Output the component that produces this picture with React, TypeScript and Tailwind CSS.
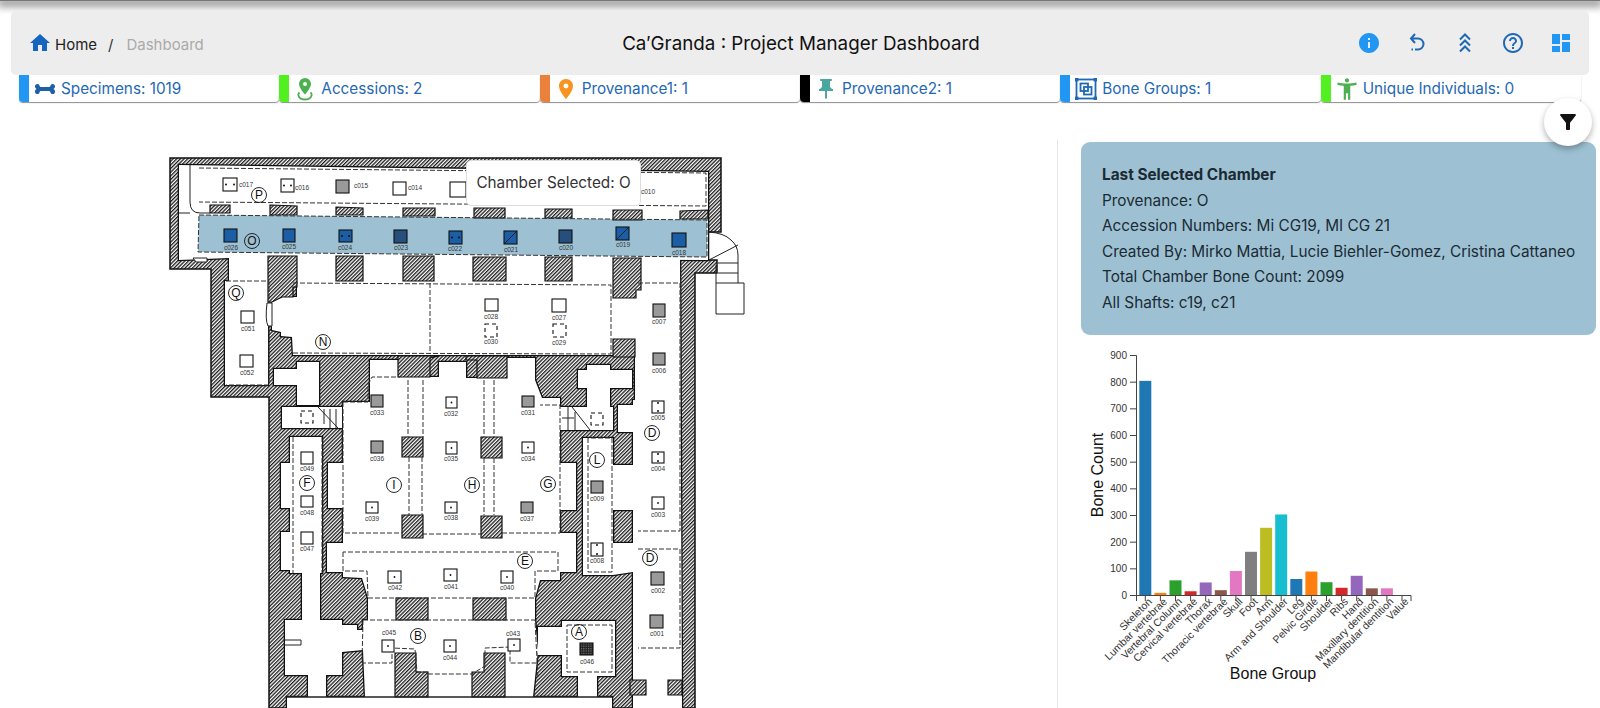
import React from "react";
import { FaBone } from "react-icons/fa";
import { MdHome, MdInfo, MdHelpOutline, MdDashboard, MdLocationOn, MdPushPin, MdAccessibilityNew, MdFilterAlt } from "react-icons/md";

const rooms = [
  "179,165 708,172 708,260 229,258 179,260",
  "229,257 268,257 268,385 225,385 225,281 229,281",
  "272,302 282,297 297,297 297,257 641,257 641,339 613,339 613,355 293,355 292,337 281,336 281,332 272,330",
  "635,257 680,257 682,708 633,708 633,400 635,400",
  "370,360 398,360 398,377 439,377 439,362 466,362 466,378 507,378 507,358 535,358 535,380 542,398 560,398 560,463 576,463 576,510 560,510 560,533 576,533 576,572 560,572 560,580 540,580 535,598 535,620 538,650 533,697 612,697 612,708 287,708 287,697 365,697 363,650 363,620 368,620 368,598 362,578 343,577 343,572 327,572 327,543 343,543 343,508 328,508 328,463 343,463 343,402 370,402",
  "538,627 562,627 562,621 615,621 615,676 597,676 597,697 578,697 578,676 562,676 562,655 538,655",
  "285,620 342,620 342,625 357,625 357,630 363,630 363,650 342,652 342,675 326,675 326,697 308,697 308,675 285,675",
  "290,437 322,437 322,573 320,573 320,620 302,620 302,573 290,573 290,570 281,570 281,532 290,532 290,508 281,508 281,463 290,463",
  "583,438 613,438 613,465 633,465 633,510 613,510 613,543 633,543 633,572 613,575 583,575",
  "618,405 638,405 638,432 618,432",
  "560,407 613,407 613,430 560,430",
  "282,407 342,407 342,428 282,428",
  "297,362 319,362 319,405 297,405 297,385 274,385 274,369 297,369",
  "587,365 610,365 610,370 632,370 632,388 610,388 610,407 587,407 587,388 578,388 578,370 587,370",
];

const piers = [
  "210,205 230,205 230,213 210,213", "270,205 297,206 297,215 270,215", "336,207 363,208 363,215 336,215",
  "403,208 435,208 435,216 403,216", "474,208 505,208 505,218 474,218", "545,209 572,209 572,218 545,218",
  "613,210 642,210 642,220 613,220", "680,211 708,210 708,219 680,219",
  "268,256 297,256 297,287 293,287 293,297 282,297 272,302 268,302", "336,256 363,256 363,281 336,281",
  "403,256 434,256 434,281 403,281", "473,257 506,257 506,281 473,281", "545,257 572,257 572,281 545,281",
  "613,258 641,258 641,290 636,290 636,298 613,298",
  "398,356 439,356 430,358 430,377 398,377", "466,356 507,356 507,378 477,378 477,360 466,360",
  "402,437 423,437 423,457 402,457", "481,437 502,437 502,458 481,458", "402,515 423,515 423,538 402,538", "481,516 502,516 502,538 481,538",
  "396,598 428,598 428,620 396,620", "473,598 506,598 506,620 473,620",
  "395,653 416,653 416,672 428,672 428,697 395,697", "484,653 505,653 505,697 472,697 472,672 484,672",
  "630,680 646,680 646,695 630,695", "668,680 682,680 682,695 668,695",
  "613,339 635,339 635,357 613,357",
];

const dashed = [
  "199,168 706,173 706,206 199,202", "226,281 269,281 269,385 226,385", "293,283 611,285 611,354 293,353",
  "638,283 680,283 680,531 638,531", "638,549 680,549 680,648 638,648",
  "343,402 368,402 368,385 372,377 400,377", "343,402 343,533 402,533",
  "423,533 423,534 481,534", "502,533 560,533 560,405 540,405",
  "293,437 293,573", "322,437 322,573", "588,438 588,572 612,572 612,438 588,438",
  "343,552 343,571 367,571 368,598 535,598 535,571 558,571 558,552 343,552",
  "363,620 535,620 538,680", "363,620 362,663 392,663 392,648 415,649 417,672 428,672 428,674 472,674 485,666 485,648 510,647 510,663 537,663",
  "567,625 612,625 612,672 567,672 567,625",
  "408,380 408,437", "423,380 423,437", "409,457 409,515", "422,457 422,515", "484,380 484,437", "494,380 494,437", "484,458 484,515", "494,458 494,515",
  "430,283 430,354",
];

type Sq = [number, number, number, number, string, string, number, number];
const squares: Sq[] = [
  [223, 178, 14, 13, "dots", "c017", 246, 187], [281, 179, 13, 13, "dots", "c016", 302, 190], [336, 180, 13, 13, "gray", "c015", 361, 188], [393, 182, 13, 13, "plain", "c014", 415, 190], [450, 182, 16, 15, "plain", "", 0, 0],
  [224, 229, 13, 13, "blue", "c026", 231, 250], [283, 229, 12, 13, "blue", "c025", 289, 249], [339, 230, 13, 12, "bluedots", "c024", 345, 250], [394, 230, 13, 13, "bluegray", "c023", 401, 250], [449, 231, 13, 13, "bluedots", "c022", 455, 251], [504, 231, 13, 13, "blueline", "c021", 511, 252], [559, 230, 13, 13, "bluegray", "c020", 566, 250], [616, 227, 13, 13, "blueline", "c019", 623, 247], [672, 233, 14, 14, "blue", "c018", 679, 255],
  [241, 311, 13, 12, "plain", "c051", 248, 331], [240, 355, 13, 12, "plain", "c052", 247, 375],
  [485, 299, 13, 12, "plain", "c028", 491, 319], [552, 299, 14, 13, "plain", "c027", 559, 320], [485, 324, 12, 13, "dash", "c030", 491, 344], [553, 324, 13, 13, "dash", "c029", 559, 345],
  [653, 304, 12, 13, "gray", "c007", 659, 324], [653, 353, 12, 12, "gray", "c006", 659, 373], [652, 401, 12, 12, "vdots", "c005", 658, 420],
  [371, 395, 12, 12, "gray", "c033", 377, 415], [446, 397, 11, 11, "dot", "c032", 451, 416], [522, 396, 12, 11, "gray", "c031", 528, 415],
  [371, 441, 12, 12, "gray", "c036", 377, 461], [446, 442, 11, 12, "dot", "c035", 451, 461], [522, 442, 12, 11, "dot", "c034", 528, 461],
  [366, 502, 12, 11, "dot", "c039", 372, 521], [445, 502, 12, 11, "dot", "c038", 451, 520], [521, 502, 12, 11, "gray", "c037", 527, 521],
  [301, 452, 12, 12, "plain", "c049", 307, 471], [301, 496, 12, 11, "plain", "c048", 307, 515], [301, 532, 12, 12, "plain", "c047", 307, 551],
  [591, 481, 12, 12, "gray", "c009", 597, 501], [591, 543, 12, 13, "vdots", "c008", 597, 563], [652, 452, 12, 11, "vdots", "c004", 658, 471], [652, 497, 12, 12, "dot", "c003", 658, 517],
  [651, 572, 13, 13, "gray", "c002", 658, 593], [650, 615, 13, 13, "gray", "c001", 657, 636],
  [388, 571, 13, 12, "dot", "c042", 395, 590], [444, 569, 13, 12, "dot", "c041", 451, 589], [501, 571, 12, 12, "dot", "c040", 507, 590],
  [382, 640, 12, 12, "dot", "c045", 389, 635], [444, 640, 12, 12, "dot", "c044", 450, 660], [508, 639, 12, 12, "dot", "c043", 513, 636], [580, 643, 13, 12, "dark", "c046", 587, 664],
  [301, 411, 12, 12, "dash", "", 0, 0], [591, 413, 12, 12, "dash", "", 0, 0],
];

const circles: [number, number, string][] = [
  [252, 241, "O"], [259, 195, "P"], [236, 293, "Q"], [323, 342, "N"], [394, 485, "I"], [472, 485, "H"], [548, 484, "G"], [307, 483, "F"], [597, 460, "L"], [525, 561, "E"], [418, 636, "B"], [579, 632, "A"], [652, 433, "D"], [650, 558, "D"],
];

function Square({ s }: { s: Sq }) {
  const [x, y, w, h, t, label, lx, ly] = s;
  const blue = t.startsWith("blue");
  const fill = t === "gray" || t === "bluegray" ? (t === "gray" ? "#9a9a9a" : "#264f7d") : t === "dark" ? "url(#chk)" : blue ? "#1b5ea6" : t === "dash" ? "none" : "#fff";
  const cx = x + w / 2;
  const cy = y + h / 2;
  return (
    <g>
      <rect x={x} y={y} width={w} height={h} fill={fill} stroke="#111" strokeWidth={1.1} strokeDasharray={t === "dash" ? "4 3" : undefined} />
      {(t === "dots" || t === "bluedots") && (
        <>
          <circle cx={x + 3} cy={cy} r={1} fill="#111" />
          <circle cx={x + w - 3} cy={cy} r={1} fill="#111" />
        </>
      )}
      {t === "vdots" && (
        <>
          <circle cx={cx} cy={y + 2} r={1} fill="#111" />
          <circle cx={cx} cy={y + h - 2} r={1} fill="#111" />
        </>
      )}
      {t === "dot" && <circle cx={cx} cy={cy} r={0.9} fill="#111" />}
      {t === "blueline" && <line x1={x} y1={y + h} x2={x + w} y2={y} stroke="#111" strokeWidth={0.8} />}
      {label && (
        <text x={lx} y={ly} textAnchor="middle" fontSize={6.5} fill="#333" fontFamily="'Liberation Sans', sans-serif">
          {label}
        </text>
      )}
    </g>
  );
}

function FloorPlan() {
  return (
    <svg viewBox="0 140 1057 568" className="block w-[1057px] h-[568px]">
      <defs>
        <pattern id="hatch" width="2.6" height="2.6" patternUnits="userSpaceOnUse" patternTransform="rotate(-45)">
          <rect width="2.6" height="2.6" fill="#fff" />
          <rect width="2.6" height="1.3" fill="#1a1a1a" />
        </pattern>
        <pattern id="chk" width="2.4" height="2.4" patternUnits="userSpaceOnUse">
          <rect width="2.4" height="2.4" fill="#222" />
          <rect width="1.2" height="1.2" fill="#777" />
        </pattern>
      </defs>
      <polygon
        points="170,158 721,158 721,232 708,232 708,260 717,260 717,273 695,273 695,708 269,708 269,397 211,397 211,269 170,269"
        fill="url(#hatch)"
        stroke="#111"
        strokeWidth={1.5}
      />
      <g stroke="#111" strokeWidth={2.6} fill="none">
        {rooms.map((p, i) => (
          <polygon key={i} points={p} />
        ))}
      </g>
      <g fill="#fff">
        {rooms.map((p, i) => (
          <polygon key={i} points={p} />
        ))}
      </g>
      <polygon points="199,215 707,220 707,257 198,252" fill="#9dc1d3" />
      <g stroke="#111" strokeWidth={1.2} fill="url(#hatch)">
        {piers.map((p, i) => (
          <polygon key={i} points={p} />
        ))}
      </g>
      <g stroke="#333" strokeWidth={1} fill="none" strokeDasharray="5 2">
        <polygon points="199,215 707,220 707,257 198,252" />
        {dashed.map((p, i) => (
          <polyline key={i} points={p} />
        ))}
      </g>
      <g stroke="#222" strokeWidth={1} fill="none">
        <path d="M190 165V202Q190 213 200 213H210M179 213H190" />
        <path d="M193 258H207V262H196Z" fill="#fff" />
        <path d="M709 232Q724 233 731 240Q738 246 738 255V283H744V314H716V265M709 260L738 245M718 263H738M718 273H738M716 283H738" />
        <path d="M267 303Q265 320 268 326L272 326V303Z" fill="#fff" />
        <path d="M572 407L590 430M568 407V430M574 418H562M575 412V430M318 407L338 428M330 409V428M336 409V428M324 409V424" />
        <path d="M285 640H301V645H285" fill="#fff" />
        <path d="M287 697H612" strokeWidth={1.5} />
      </g>
      {squares.map((s, i) => (
        <Square key={i} s={s} />
      ))}
      <text x={641} y={194} fontSize={6.5} fill="#333" fontFamily="'Liberation Sans', sans-serif">c010</text>
      <g fontFamily="'Liberation Sans', sans-serif">
        {circles.map(([x, y, l], i) => (
          <g key={i}>
            <circle cx={x} cy={y} r={7.5} fill="none" stroke="#111" strokeWidth={0.9} />
            <text x={x} y={y + 4.3} textAnchor="middle" fontSize={12} fill="#111">
              {l}
            </text>
          </g>
        ))}
      </g>
    </svg>
  );
}

const bars: [string, number, string][] = [
  ["Skeleton", 803, "#1f77b4"], ["Lumbar vertebrae", 8, "#ff7f0e"], ["Vertebral Column", 55, "#2ca02c"], ["Cervical vertebrae", 14, "#d62728"], ["Thorax", 47, "#9467bd"], ["Thoracic vertebrae", 18, "#8c564b"], ["Skull", 90, "#e377c2"], ["Foot", 162, "#7f7f7f"], ["Arm", 252, "#bcbd22"], ["Arm and Shoulder", 302, "#17becf"], ["Leg", 60, "#1f77b4"], ["Pelvic Girdle", 88, "#ff7f0e"], ["Shoulder", 48, "#2ca02c"], ["Ribs", 27, "#d62728"], ["Hand", 72, "#9467bd"], ["Maxillary dentition", 25, "#8c564b"], ["Mandibular dentition", 25, "#e377c2"], ["Value", 0, "#7f7f7f"],
];

function Chart() {
  const y0 = 595;
  const k = 240 / 900;
  return (
    <svg viewBox="1081 340 516 368" className="block w-[516px] h-[368px]" fontFamily="'Liberation Sans', Arial, sans-serif">
      {bars.map(([n, v, c], i) => {
        const x = 1139.3 + i * 15.1;
        return <rect key={n} x={x} y={y0 - v * k} width={12} height={v * k} fill={c} />;
      })}
      <path d="M1130 355.5H1136.5V595.5H1411V601" fill="none" stroke="#444" strokeWidth={1} />
      {Array.from({ length: 10 }, (_, i) => {
        const y = y0 - i * 100 * k;
        return (
          <g key={i}>
            <line x1={1130} x2={1136} y1={y + 0.5} y2={y + 0.5} stroke="#444" />
            <text x={1127} y={y + 4} textAnchor="end" fontSize={10} fill="#333">
              {i * 100}
            </text>
          </g>
        );
      })}
      <line x1={1136.5} x2={1136.5} y1={595} y2={601} stroke="#444" />
      {bars.map(([n], i) => {
        const x = 1145.3 + i * 15.1;
        return (
          <g key={n}>
            <line x1={x} x2={x} y1={595} y2={601} stroke="#444" />
            <text transform={`translate(${x + 3} 598) rotate(-45)`} textAnchor="end" fontSize={10.5} fill="#333" dy="6">
              {n}
            </text>
          </g>
        );
      })}
      <text x={1273} y={679} textAnchor="middle" fontSize={16} fill="#111">Bone Group</text>
      <text transform="translate(1103 475) rotate(-90)" textAnchor="middle" fontSize={16} fill="#111">Bone Count</text>
    </svg>
  );
}

const UndoIcon = () => (
  <svg viewBox="0 0 24 24" className="w-6 h-6" fill="none" stroke="#1f68b5" strokeWidth={2}>
    <path d="M10 3L6 7.5L10 12M6 7.5H13A5.5 5.5 0 0 1 13 18.5H10" />
    <path d="M6.5 18.5H8" />
  </svg>
);
const TripleUp = () => (
  <svg viewBox="0 0 24 24" className="w-6 h-6" fill="none" stroke="#1f68b5" strokeWidth={2}>
    <path d="M7 8.5L12 3.5L17 8.5M7 14.5L12 9.5L17 14.5M7 20.5L12 15.5L17 20.5" />
  </svg>
);
const RadiusPin = () => (
  <svg viewBox="0 0 16 24" className="w-[16px] h-[24px]" fill="#4caf50">
    <path d="M8 1A6 6 0 0 0 2 7C2 11 8 17.5 8 17.5S14 11 14 7A6 6 0 0 0 8 1ZM8 9A2 2 0 1 1 8 5A2 2 0 0 1 8 9Z" fillRule="evenodd" />
    <path d="M2.5 15.5C0.5 17 1 22.5 8 22.5S15.5 17 13.5 15.5" fill="none" stroke="#4caf50" strokeWidth={1.8} />
  </svg>
);
const SelectGroup = () => (
  <svg viewBox="0 0 24 24" className="w-[24px] h-[24px]" fill="none" stroke="#1f68b5" strokeWidth={1.8}>
    <rect x="2.5" y="2.5" width="19" height="19" />
    <rect x="6.5" y="6.5" width="7.5" height="7.5" />
    <rect x="10" y="10" width="7.5" height="7.5" />
    <g fill="#1f68b5" stroke="none">
      <rect x="1" y="1" width="3.4" height="3.4" />
      <rect x="19.6" y="1" width="3.4" height="3.4" />
      <rect x="1" y="19.6" width="3.4" height="3.4" />
      <rect x="19.6" y="19.6" width="3.4" height="3.4" />
    </g>
  </svg>
);

const stats: { strip: string; icon: React.ReactNode; text: string }[] = [
  { strip: "bg-[#2196f3]", icon: <FaBone className="w-[20px] h-[20px] text-[#1f5fa8]" />, text: "Specimens: 1019" },
  { strip: "bg-[#52f020]", icon: <RadiusPin />, text: "Accessions: 2" },
  { strip: "bg-[#e9813b]", icon: <MdLocationOn className="w-[24px] h-[24px] text-[#f7931e]" />, text: "Provenance1: 1" },
  { strip: "bg-black", icon: <MdPushPin className="w-[24px] h-[24px] text-[#4ca6a0]" />, text: "Provenance2: 1" },
  { strip: "bg-[#2196f3]", icon: <SelectGroup />, text: "Bone Groups: 1" },
  { strip: "bg-[#52f020]", icon: <MdAccessibilityNew className="w-[26px] h-[26px] text-[#4caf50]" />, text: "Unique Individuals: 0" },
];

export default function App() {
  return (
    <div className="relative w-[1600px] h-[708px] overflow-hidden bg-white text-[#212121] font-['Inter','Liberation_Sans',sans-serif]">
      <div className="h-[1px] bg-[#777] shadow-[0_2px_8px_3px_rgba(0,0,0,0.5)]" />
      <div className="mx-[11px] mt-[10px] h-[64px] bg-[#ededed] rounded-[5px] grid grid-cols-[1fr_auto_1fr] items-center pl-[18px] pr-[16px]">
        <div className="flex items-center">
          <MdHome className="w-[24px] h-[24px] text-[#1565c0] -ml-[1px]" />
          <span className="ml-[3px] mt-[4px] text-[15px] text-[#222]">Home</span>
          <span className="ml-[11px] mt-[4px] text-[15px] text-[#333]">/</span>
          <span className="ml-[13px] mt-[4px] text-[15px] text-[#aaa]">Dashboard</span>
        </div>
        <div className="text-[18.8px] text-[#111] mt-[2px] whitespace-nowrap">Ca′Granda : Project Manager Dashboard</div>
        <div className="flex items-center justify-end gap-[24px]">
          <MdInfo className="w-[24px] h-[24px] text-[#2196f3]" />
          <UndoIcon />
          <TripleUp />
          <MdHelpOutline className="w-[24px] h-[24px] text-[#1f68b5]" />
          <MdDashboard className="w-[24px] h-[24px] text-[#2196f3]" />
        </div>
      </div>
      <div className="ml-[19px] w-[1562px] h-[27px] grid grid-cols-6">
        {stats.map((s) => (
          <div key={s.text} className="flex h-[27px] bg-white rounded-b-[4px] shadow-[0_1px_1px_rgba(0,0,0,0.45)] overflow-hidden items-stretch">
            <div className={`w-[10px] ${s.strip}`} />
            <div className="w-[32px] flex items-center justify-center">{s.icon}</div>
            <div className="flex items-center pt-[2px] text-[15.3px] text-[#1f68b5]">{s.text}</div>
          </div>
        ))}
      </div>
      <div className="flex mt-[38px]">
        <div className="relative w-[1057px] shrink-0">
          <FloorPlan />
          <div className="absolute left-[466px] top-[20px] w-[175px] h-[46px] bg-white rounded-[5px] border border-[#ddd] flex items-center justify-center text-[15.3px] text-[#333] whitespace-nowrap">
            Chamber Selected: O
          </div>
        </div>
        <div className="flex-1 border-l border-[#e5e5e5] pl-[23px]">
          <div className="w-[515px] h-[193px] mt-[2px] bg-[#9dc1d3] rounded-[9px] pl-[21px] pt-[20px] text-[15.35px] leading-[25.6px] text-[#1c2a33]">
            <div className="font-bold">Last Selected Chamber</div>
            <div>Provenance: O</div>
            <div>Accession Numbers: Mi CG19, MI CG 21</div>
            <div className="whitespace-nowrap">Created By: Mirko Mattia, Lucie Biehler-Gomez, Cristina Cattaneo</div>
            <div>Total Chamber Bone Count: 2099</div>
            <div>All Shafts: c19, c21</div>
          </div>
          <div className="mt-[5px]">
            <Chart />
          </div>
        </div>
      </div>
      <div className="absolute left-[1544px] top-[98px] w-[48px] h-[48px] rounded-full bg-white shadow-[0_3px_6px_rgba(0,0,0,0.3)] flex items-center justify-center">
        <MdFilterAlt className="w-[24px] h-[24px] text-[#111]" />
      </div>
    </div>
  );
}
